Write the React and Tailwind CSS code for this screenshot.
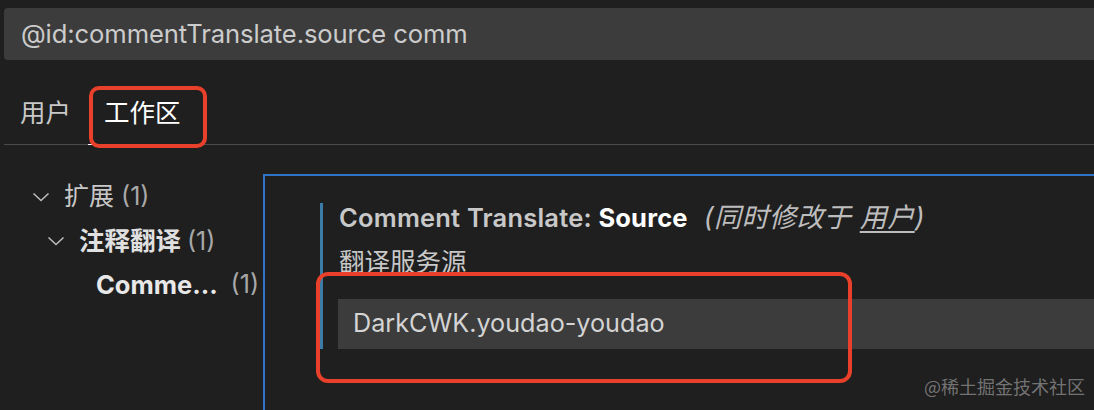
import React from 'react';

const font = { fontFamily: '"Inter", "Noto Sans CJK SC", sans-serif' };

function Chevron() {
  return (
    <svg width="18" height="12" viewBox="0 0 18 12" className="shrink-0">
      <path d="M1.5 2.5 L9 9.5 L16.5 2.5" fill="none" stroke="#bbbbbb" strokeWidth="1.6" />
    </svg>
  );
}

export default function App() {
  return (
    <div
      className="relative w-[1094px] h-[410px] overflow-hidden bg-[#1f1f1f] text-[#cccccc]"
      style={font}
    >
      {/* search */}
      <div className="ml-[4px] mt-[8px] h-[52px] bg-[#3c3c3c] rounded-l-[4px] flex items-center pl-[17px] text-[25.6px] tracking-[-0.1px]">
        @id:commentTranslate.source comm
      </div>

      {/* tabs */}
      <div className="ml-[4px] h-[85px] flex items-end border-b border-[#4b4b4b]">
        <div className="pl-[16px] pr-[18px] pb-[12px] text-[25.5px] text-[#c8c8c8]">用户</div>
        <div className="relative px-[15px] pb-[12px] text-[25.5px] text-white">
          工作区
          <div className="absolute left-[-1px] right-0 bottom-[-1px] h-[1px] bg-white" />
        </div>
      </div>

      <div className="flex mt-[29px]">
        {/* tree */}
        <div className="w-[263px] shrink-0 pt-[1px] text-[25px]">
          <div className="flex items-center h-[44px] pl-[32px] gap-[14px]">
            <Chevron />
            <span className="text-[#c8c8c8]">扩展 <span className="text-[#a8a8a8]">(1)</span></span>
          </div>
          <div className="flex items-center h-[44px] pl-[47px] gap-[14px]">
            <Chevron />
            <span className="font-bold text-[#e0e0e0]">
              <span className="text-[25.5px]">注释翻译</span> <span className="font-normal text-[#a8a8a8]">(1)</span>
            </span>
          </div>
          <div className="flex items-center h-[44px] pl-[96px]">
            <span className="font-bold text-[#e8e8e8] text-[25.5px]">Comme...</span>
            <span className="ml-auto pr-[4px] text-[#a8a8a8]">(1)</span>
          </div>
        </div>

        {/* setting */}
        <div className="flex-1 h-[240px] border-l-2 border-t-2 border-[#2f74c8] pl-[55px] pt-[27px]">
          <div className="border-l-[3px] border-[#3a7ca5] pl-[15px]">
            <div className="pl-[1px] text-[25.5px] font-semibold leading-[30px] whitespace-nowrap tracking-[0.2px]">
              <span className="text-[#c8c8c8]">Comment Translate: </span>
              <span className="text-white font-bold">Source</span>
              <span className="ml-[16px] font-normal italic text-[#bdbdbd] text-[27px] tracking-[0.5px]">
                (同时修改于 <span className="underline underline-offset-4">用户</span>)
              </span>
            </div>
            <div className="mt-[14px] pl-[1px] text-[25.5px] text-[#c8c8c8] leading-[30px]">翻译服务源</div>
            <div className="mt-[22px] h-[50px] bg-[#3c3c3c] flex items-center pl-[15px] text-[25.2px] text-[#d4d4d4]">
              DarkCWK.youdao-youdao
            </div>
          </div>
        </div>
      </div>

      {/* annotation boxes */}
      <div className="absolute left-[89px] top-[86px] w-[118px] h-[62px] rounded-[10px] border-[4px] border-[#e8402a]" />
      <div className="absolute left-[316px] top-[272px] w-[536px] h-[111px] rounded-[12px] border-[4px] border-[#e8402a]" />

      {/* watermark */}
      <div className="absolute right-[9px] bottom-[10px] text-[18px] text-[#8a8a8a]/80" style={{ fontFamily: '"Noto Sans CJK SC", sans-serif' }}>
        @稀土掘金技术社区
      </div>
    </div>
  );
}
